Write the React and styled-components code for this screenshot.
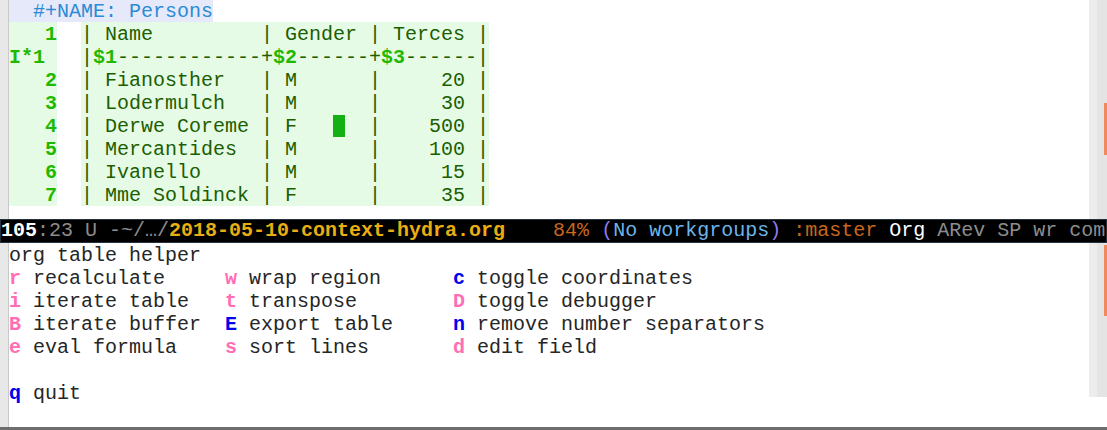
import React from 'react';
import styled, { createGlobalStyle } from 'styled-components';

const GlobalStyle = createGlobalStyle`
	body {
		margin: 0;
		background: #fff;
		font-family: 'Liberation Mono', 'DejaVu Sans Mono', monospace;
		font-size: 20px;
	}
`;

const Frame = styled.div`
	width: 1107px;
	height: 430px;
	display: flex;
	flex-direction: column;
	overflow: hidden;
	background: #fff;
`;

const Area = styled.div`
	display: flex;
	height: ${(p) => p.h}px;
`;

const Edge = styled.div`
	width: 8px;
	background: #e8e8e8;
	border-right: 1px solid #c9c9c9;
`;

// rows are 23px; the 25px line box drops the glyphs by one pixel
const Pane = styled.div`
	flex: 1;
	display: flex;
	flex-direction: column;
	margin-top: ${(p) => p.shift || 0}px;
	white-space: pre;
	line-height: 25px;
`;

const Gutter = styled.div`
	width: 18px;
	display: flex;
	flex-direction: column;
	background: linear-gradient(to right, #ededed 0 8px, #e4e4e4 8px);
	height: ${(p) => p.h || 'auto'};
`;

const Mark = styled.div`
	margin-top: ${(p) => p.top}px;
	margin-left: 15px;
	width: 3px;
	height: ${(p) => p.len}px;
	background: #f08a5c;
`;

const Row = styled.div`
	display: flex;
	align-items: flex-start;
	height: 23px;
	flex-shrink: 0;
`;

const NameLine = styled.span`
	height: 23px;
	background: #e6e9fa;
	color: #2a8bd6;
`;

const LineNo = styled.span`
	width: 48px;
	height: 23px;
	background: #e6fbe6;
	color: #1fb800;
	font-weight: bold;
`;

const Fringe = styled.span`
	width: 24px;
`;

const Cells = styled.span`
	width: 408px;
	height: 23px;
	background: #e6fbe6;
	color: #1c5e00;
`;

const Ref = styled.b`
	color: #1fb800;
`;

const Cursor = styled.span`
	display: inline-block;
	width: 12px;
	height: 22px;
	margin-top: 1px;
	vertical-align: top;
	background: #12b012;
`;

const ModeLine = styled.div`
	height: 22px;
	line-height: 22px;
	background: #000;
	border: 1px solid #23323f;
	color: #8c8c8c;
	white-space: pre;
	overflow: hidden;
	flex-shrink: 0;
`;

const Seg = styled.span`
	color: ${(p) => p.c || 'inherit'};
	font-weight: ${(p) => (p.bold ? 'bold' : 'normal')};
`;

const HelpRow = styled.div`
	display: grid;
	grid-template-columns: 216px 228px 1fr;
	height: 23px;
	flex-shrink: 0;
	color: #262626;
`;

const Key = styled.b`
	color: ${(p) => (p.blue ? '#0000ee' : '#ff6eb4')};
`;

const BottomBar = styled.div`
	height: 3px;
	background: #6e6e6e;
`;

const rows = [
	['   1', '| Name         | Gender | Terces |'],
	['I*1 ', null],
	['   2', '| Fianosther   | M      |     20 |'],
	['   3', '| Lodermulch   | M      |     30 |'],
	['   4', 'cursor'],
	['   5', '| Mercantides  | M      |    100 |'],
	['   6', '| Ivanello     | M      |     15 |'],
	['   7', '| Mme Soldinck | F      |     35 |'],
];

const help = [
	[['r', 'recalculate'], ['w', 'wrap region'], ['c', 'toggle coordinates', true]],
	[['i', 'iterate table'], ['t', 'transpose'], ['D', 'toggle debugger']],
	[['B', 'iterate buffer'], ['E', 'export table', true], ['n', 'remove number separators', true]],
	[['e', 'eval formula'], ['s', 'sort lines'], ['d', 'edit field']],
];

const TableCells = ({ text }) => {
	if (text === null) {
		return (
			<Cells>
				|<Ref>$1</Ref>------------+<Ref>$2</Ref>------+<Ref>$3</Ref>------|
			</Cells>
		);
	}
	if (text === 'cursor') {
		return (
			<Cells>
				{'| Derwe Coreme | F   '}
				<Cursor />
				{'  |    500 |'}
			</Cells>
		);
	}
	return <Cells>{text}</Cells>;
};

const Entry = ({ k, label, blue }) => (
	<span>
		<Key blue={blue}>{k}</Key> {label}
	</span>
);

export default function App() {
	return (
		<Frame>
			<GlobalStyle />
			<Area h={219}>
				<Edge />
				<Pane shift={-1}>
					<Row>
						<NameLine>{'  #+NAME: Persons'}</NameLine>
					</Row>
					{rows.map(([no, text]) => (
						<Row key={no}>
							<LineNo>{no}</LineNo>
							<Fringe />
							<TableCells text={text} />
						</Row>
					))}
				</Pane>
				<Gutter>
					<Mark top={103} len={52} />
				</Gutter>
			</Area>
			<ModeLine>
				<Seg c='#fff' bold>105</Seg>
				<Seg>:23 U -~/…/</Seg>
				<Seg c='#e8ae12' bold>2018-05-10-context-hydra.org</Seg>
				<Seg c='#c9671d'>{'    84%'}</Seg>
				<Seg c='#8c7cf0'>{' ('}</Seg>
				<Seg c='#6cb4e8'>No workgroups</Seg>
				<Seg c='#8c7cf0'>)</Seg>
				<Seg c='#c9671d'> :master</Seg>
				<Seg c='#fff'> Org</Seg>
				<Seg> ARev SP wr com</Seg>
			</ModeLine>
			<Area h={184}>
				<Edge />
				<Pane>
					<HelpRow>org table helper</HelpRow>
					{help.map((line, i) => (
						<HelpRow key={i}>
							{line.map(([k, label, blue]) => (
								<Entry key={k} k={k} label={label} blue={blue} />
							))}
						</HelpRow>
					))}
					<HelpRow />
					<HelpRow>
						<Entry k='q' label='quit' blue />
					</HelpRow>
				</Pane>
				<Gutter h='154px'>
					<Mark top={2} len={71} />
				</Gutter>
			</Area>
			<BottomBar />
		</Frame>
	);
}
